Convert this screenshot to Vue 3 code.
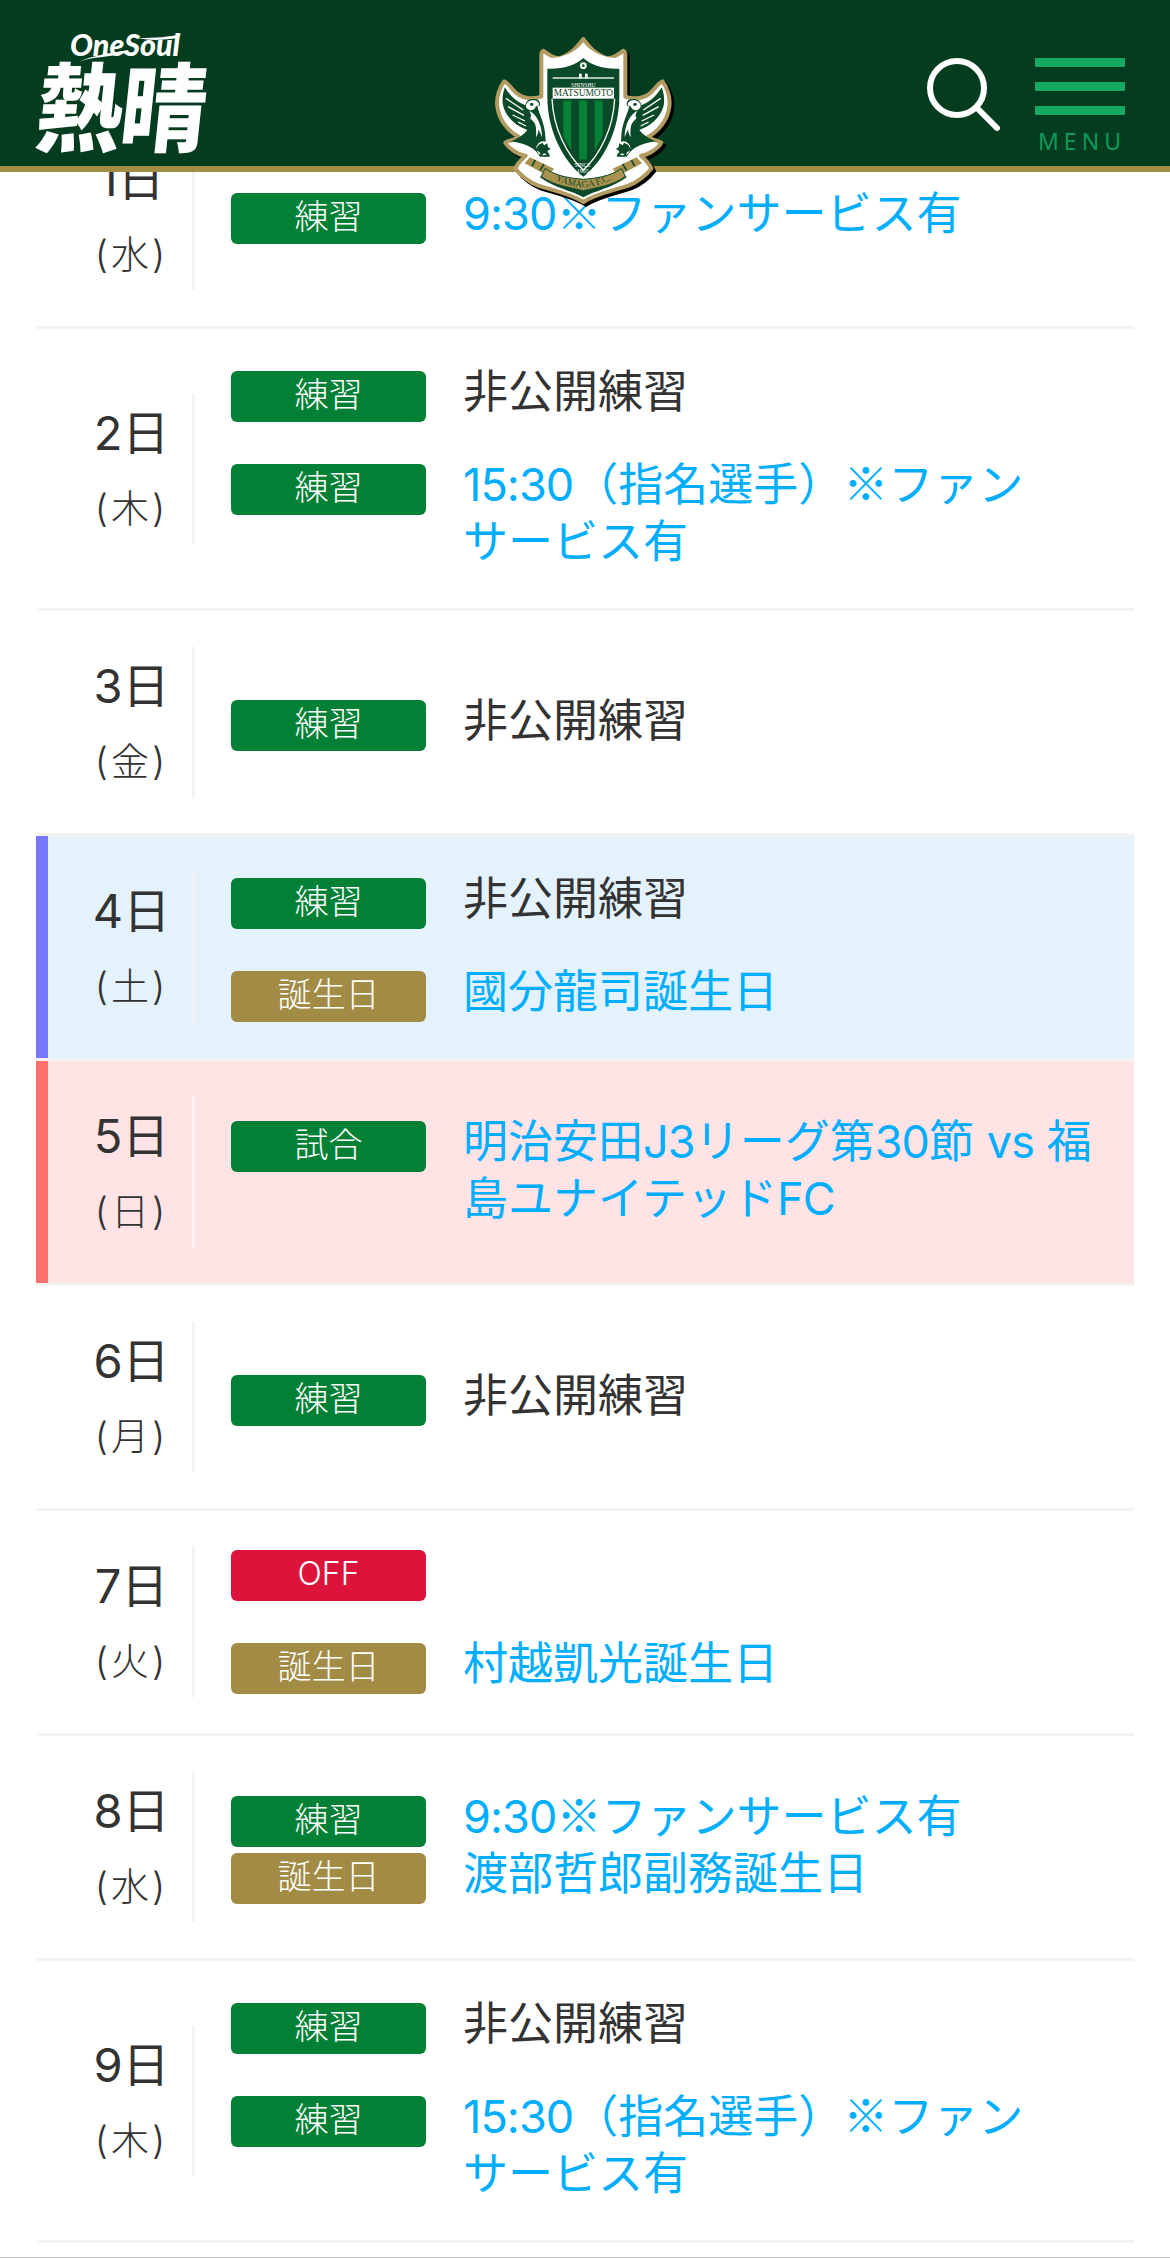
<script setup>
const BLUE = 'link'
const DARK = 'plain'
const practice = { kind: 'green', label: '練習' }
const birthday = { kind: 'gold', label: '誕生日' }
const closed = { text: '非公開練習', tone: DARK, ...practice }
const fan = { text: '9:30※ファンサービス有', tone: BLUE, ...practice }
const picked = { text: '15:30（指名選手）※ファン\nサービス有', tone: BLUE, ...practice }

const rows = [
  { day: '1日', week: '(水)', items: [fan] },
  { day: '2日', week: '(木)', items: [closed, picked] },
  { day: '3日', week: '(金)', items: [closed] },
  { day: '4日', week: '(土)', tint: 'sat', items: [closed, { ...birthday, text: '國分龍司誕生日', tone: BLUE }] },
  { day: '5日', week: '(日)', tint: 'sun', items: [{ kind: 'green', label: '試合', text: '明治安田J3リーグ第30節 vs 福島ユナイテッドFC', tone: BLUE }] },
  { day: '6日', week: '(月)', items: [closed] },
  { day: '7日', week: '(火)', items: [{ kind: 'red', label: 'OFF', text: '' }, { ...birthday, text: '村越凱光誕生日', tone: BLUE }] },
  { day: '8日', week: '(水)', tight: true, items: [fan, { ...birthday, text: '渡部哲郎副務誕生日', tone: BLUE }] },
  { day: '9日', week: '(木)', items: [closed, picked] }
]

const pieces = (text) => text.split(/(※|[0-9A-Za-z:]+)/).filter(Boolean).map((value) => ({
  value,
  cls: value === '※' ? 'mark' : /^[0-9A-Za-z:]+$/.test(value) ? 'latin' : ''
}))

const sides = ['', 'translate(860 0) scale(-1 1)']
const outline = 'M430 117C445 135 465 165 505 175C525 172 538 160 550 152Q556 155 556 165L556 290C585 300 620 295 640 270C650 258 660 246 667 244C680 260 692 290 688 320C683 360 655 395 622 412C640 420 655 422 664 428C655 445 625 465 603 467C615 478 628 490 634 505C620 525 590 548 565 557C520 572 470 580 430 606C390 580 340 572 295 557C270 548 240 525 226 505C232 490 245 478 257 467C235 465 205 445 196 428C205 422 220 420 238 412C205 395 177 360 172 320C168 290 180 260 193 244C200 246 210 258 220 270C240 295 275 300 304 290L304 165Q304 155 310 152C322 160 335 172 355 175C395 165 415 135 430 117Z'
</script>

<template>
  <div class="page">
    <header class="site-header">
      <svg class="slogan-mark" viewBox="0 0 200 70" aria-label="OneSoul">
        <text x="70" y="56" class="slogan-en" textLength="110" lengthAdjust="spacingAndGlyphs">OneSoul</text>
        <path d="M78 62C95 56 105 58 125 53L129 50C110 53 95 55 78 62Z" fill="#fff" />
        <path d="M138 38C155 38 170 37 181 34L178 38C165 40 150 41 138 38Z" fill="#fff" />
      </svg>
      <div class="slogan-ja">熱晴</div>
      <svg class="crest" viewBox="0 0 900 660" aria-label="松本山雅FC">
        <path :d="outline" transform="translate(8 8)" fill="#000" stroke="#000" stroke-width="12" />
        <path :d="outline" fill="#fff" stroke="#b39c62" stroke-width="12" stroke-linejoin="round" />
        <g v-for="side in sides" :key="side" :transform="side">
          <path d="M195 262C208 285 228 305 256 316C258 300 272 294 290 298C300 302 302 312 298 318L292 318C296 340 315 370 316 410C316 425 322 445 330 470L300 470C285 445 262 432 212 424C235 415 250 405 262 390C225 378 192 345 188 310C186 292 190 275 195 262Z" fill="#0a4a28" />
          <path d="M198 295L250 330M204 320L252 346M218 345L255 363M234 366L258 378" stroke="#fff" stroke-width="4" fill="none" />
          <path d="M258 318C258 306 270 299 284 301C293 303 298 309 297 316L288 319C284 330 272 334 264 328C260 325 258 322 258 318Z" fill="#fff" />
          <circle cx="275" cy="313" r="5" fill="#0a4a28" />
          <path d="M268 332C290 345 306 372 306 412C298 388 284 368 270 354C276 348 272 340 268 332Z" fill="#fff" />
          <path d="M280 352C288 375 290 392 288 412C296 400 298 385 294 368Z" fill="#fff" />
          <circle cx="310" cy="445" r="21" fill="#fff" />
          <path d="M296 434L308 428L312 436L322 430L324 442L332 446L322 454L326 464L312 460L304 468L298 456L286 450Z" fill="#0a4a28" />
          <path d="M248 492L268 466L348 504L326 536Z" fill="#fff" />
          <path d="M254 490L270 472L342 506L325 528Z" fill="#a9924e" />
          <path d="M286 480L276 498M312 492L300 512" stroke="#0a4a28" stroke-width="5" />
        </g>
        <path d="M314 172C340 180 395 168 430 130C465 168 520 180 546 172L546 290C546 395 495 490 430 540C365 490 314 395 314 290Z" fill="#fff" />
        <path d="M322 206C365 208 405 198 430 174C455 198 495 208 538 206L538 290C538 392 490 484 430 530C370 484 322 392 322 290Z" fill="#0a4a28" />
        <path d="M336 296C340 385 380 465 430 510C480 465 520 385 524 296" fill="none" stroke="#fff" stroke-width="4" />
        <rect x="338" y="232" width="184" height="4" fill="#fff" />
        <rect x="338" y="263" width="184" height="33" fill="#fff" />
        <circle cx="430" cy="197" r="10" fill="#fff" />
        <circle cx="430" cy="197" r="4" fill="#0a4a28" />
        <rect x="417" y="221" width="8" height="14" fill="#fff" />
        <rect x="435" y="221" width="8" height="14" fill="#fff" />
        <path d="M370 302H394V452L370 408Z" fill="#058237" />
        <rect x="417" y="302" width="24" height="176" fill="#058237" />
        <path d="M464 302H488V408L464 452Z" fill="#058237" />
        <text class="crest-serif" x="430" y="260" text-anchor="middle" font-size="17" fill="#fff">SHINSHU</text>
        <text class="crest-serif" x="430" y="289" text-anchor="middle" font-size="28" textLength="178" lengthAdjust="spacingAndGlyphs" fill="#0a4a28">MATSUMOTO</text>
        <text class="crest-serif" x="428" y="500" text-anchor="middle" font-size="17" fill="#fff">SINCE</text>
        <text class="crest-serif" x="428" y="518" text-anchor="middle" font-size="18" fill="#fff">1965</text>
        <path d="M300 532C345 565 395 572 430 592C465 572 515 565 560 532L556 526C515 558 470 562 430 572C390 562 345 558 304 526Z" fill="#0a4a28" />
        <path d="M315 505C350 530 395 535 430 538C465 535 510 530 545 505L556 530C515 558 470 562 430 572C390 562 345 558 304 530Z" fill="#a9924e" stroke="#0a4a28" stroke-width="3" />
        <path id="crest-arc" d="M318 526C360 548 395 560 430 562C465 560 500 548 542 526" fill="none" />
        <text class="crest-serif" font-size="28" fill="#0a4a28" text-anchor="middle"><textPath href="#crest-arc" startOffset="50%">YAMAGA F.C.</textPath></text>
      </svg>
      <svg class="search" viewBox="0 0 60 60" aria-label="検索">
        <circle cx="28" cy="28" r="27" fill="none" stroke="#fff" stroke-width="6" />
        <path d="M49 49L68 68" fill="none" stroke="#fff" stroke-width="6" stroke-linecap="round" />
      </svg>
      <div class="menu">
        <span class="bar"></span>
        <span class="bar"></span>
        <span class="bar"></span>
        <span class="menu-label">MENU</span>
      </div>
    </header>

    <main class="schedule">
      <section v-for="row in rows" :key="row.day" class="row" :class="row.tint">
        <div class="date">
          <div class="day">{{ row.day }}</div>
          <div class="week">{{ row.week }}</div>
        </div>
        <div class="events" :class="{ tight: row.tight }">
          <div v-for="(item, i) in row.items" :key="i" class="event">
            <span class="tag" :class="item.kind">{{ item.label }}</span>
            <p v-if="item.text" class="note" :class="item.tone"><span v-for="(part, j) in pieces(item.text)" :key="j" :class="part.cls">{{ part.value }}</span></p>
          </div>
        </div>
      </section>
    </main>
    <div class="edge"></div>
  </div>
</template>

<style>
html, body { margin: 0; padding: 0; background: #fff; }
</style>

<style scoped>
.page {
  position: relative;
  width: 1170px;
  height: 2258px;
  overflow: hidden;
  background: #fff;
  font-family: Inter, "Noto Sans CJK JP", sans-serif;
  color: #333;
}
.site-header {
  position: absolute;
  top: 0;
  left: 0;
  z-index: 5;
  width: 100%;
  height: 166px;
  background: #033c1f;
  border-bottom: 6px solid #a38c44;
}
.slogan-mark { position: absolute; left: 0; top: 0; width: 200px; height: 70px; }
.slogan-en { font: italic 900 30px Lato, sans-serif; fill: #fff; }
.slogan-ja {
  position: absolute;
  left: 34px;
  top: 55px;
  width: 175px;
  color: #fff;
  text-align: center;
  font: 900 86px/96px "Noto Sans CJK JP", sans-serif;
  letter-spacing: -2px;
  white-space: nowrap;
  transform: skewX(-6deg) scaleY(1.12);
}
.crest { position: absolute; left: 440px; top: 0; width: 300px; height: 220px; }
.crest-serif { font-family: "Liberation Serif", serif; }
.search { position: absolute; left: 929px; top: 60px; width: 60px; height: 60px; overflow: visible; }
.menu { position: absolute; left: 1035px; top: 58px; width: 90px; display: flex; flex-direction: column; gap: 15px; }
.bar { display: block; height: 9px; background: #14aa64; }
.menu-label {
  margin-top: -3px;
  font: 400 23px/28px "Noto Sans", sans-serif;
  letter-spacing: 5px;
  padding-left: 3px;
  color: #0e9a58;
  white-space: nowrap;
}
.schedule { margin: 0 36px; padding-top: 104px; }
.row {
  display: flex;
  align-items: center;
  padding: 36px 0;
  border-bottom: 3px solid #f5f3f1;
}
.row.sat { background: #e3f2fd; box-shadow: inset 12px 0 0 #7878ff; }
.row.sun { background: #ffe3e5; box-shadow: inset 12px 0 0 #ff7070; }
.date {
  box-sizing: border-box;
  flex: 0 0 159px;
  height: 150px;
  padding-left: 38px;
  padding-right: 3px;
  border-right: 3px solid #f5f3f1;
  text-align: center;
}
.day { font-size: 47px; line-height: 78px; white-space: nowrap; }
.week { font-size: 38px; font-weight: 300; line-height: 72px; letter-spacing: 3px; white-space: nowrap; }
.events { flex: 1; display: flex; flex-direction: column; gap: 36px; margin-left: 36px; padding-right: 24px; }
.events.tight { gap: 0; }
.event { display: flex; align-items: flex-start; gap: 37px; }
.tag {
  flex: 0 0 195px;
  height: 51px;
  margin-top: 6px;
  border-radius: 6px;
  color: #fff;
  font-size: 34px;
  font-weight: 300;
  line-height: 48px;
  text-align: center;
}
.tag:only-child { margin-top: 0; }
.green { background: #028035; }
.gold { background: #a28b45; }
.red { background: #dc143c; font-size: 32px; }
.note { margin: -2px 0 2px; flex: 1; font-size: 45px; line-height: 57px; white-space: pre-line; }
.mark { font-family: "Noto Sans CJK JP", sans-serif; line-height: 0; }
.latin { letter-spacing: -0.9px; }
.link { color: #00aeff; }
.plain { color: #333; }
.edge { position: absolute; left: 0; right: 0; bottom: 0; height: 1px; background: #c8c8c8; }
</style>
